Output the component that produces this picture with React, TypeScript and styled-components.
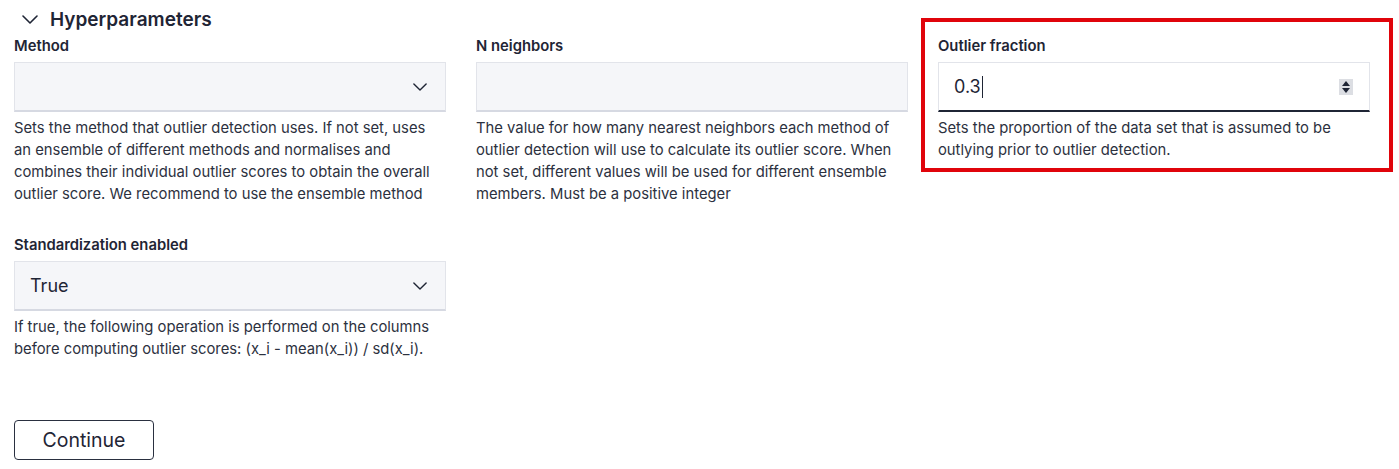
import React from "react";
import styled, { createGlobalStyle } from "styled-components";

const Global = createGlobalStyle`
  html, body { margin: 0; padding: 0; background: #ffffff; }
  body { font-family: Inter, "Noto Sans", sans-serif; color: #1f2535; }
  * { box-sizing: border-box; }
`;

const Page = styled.div`
  padding: 0 14px;
  width: 1399px;
`;

const SectionHeader = styled.div`
  display: flex;
  align-items: center;
  gap: 12px;
  height: 36px;
  padding-left: 8px;
  padding-top: 2px;
`;

const Title = styled.h2`
  margin: 0;
  font-size: 19px;
  font-weight: 600;
  color: #1f2535;
`;

const Grid = styled.div`
  display: grid;
  grid-template-columns: repeat(3, 432px);
  column-gap: 30px;
  row-gap: 30px;
  align-items: start;
`;

const Field = styled.div`
  position: relative;
  display: flex;
  flex-direction: column;
`;

const Highlight = styled.div`
  position: absolute;
  left: -17px;
  right: -23px;
  top: -18px;
  bottom: -11px;
  border: 4px solid #e0040b;
  pointer-events: none;
`;

const Label = styled.label`
  font-size: 14.8px;
  font-weight: 600;
  line-height: 20px;
  color: #1f2535;
  margin-bottom: 6px;
`;

const Box = styled.div<{ $variant: "muted" | "active" }>`
  height: 50px;
  display: flex;
  align-items: center;
  justify-content: space-between;
  padding: 0 18px 0 15px;
  font-size: 18px;
  color: #1f2535;
  background: ${(p) => (p.$variant === "muted" ? "#f5f6f9" : "#ffffff")};
  border: 1px solid #e2e4ea;
  border-bottom: ${(p) =>
    p.$variant === "muted" ? "2px solid #d6d9e2" : "2px solid #1f2535"};
`;

const Caret = styled.span`
  display: inline-block;
  width: 1px;
  height: 22px;
  background: #1f2535;
  margin-left: 1px;
`;

const Value = styled.span`
  display: flex;
  align-items: center;
`;

const Spinner = styled.span`
  display: flex;
  flex-direction: column;
  align-items: center;
  justify-content: center;
  gap: 2px;
  width: 14px;
  height: 16px;
  background: #dcdee3;
  margin-right: -2px;
`;

const Help = styled.p`
  margin: 5px 0 0;
  font-size: 14.8px;
  line-height: 22px;
  color: #2c3140;
`;

const Actions = styled.div`
  margin-top: 60px;
`;

const Button = styled.button`
  width: 140px;
  height: 40px;
  background: #ffffff;
  border: 1px solid #2a3040;
  border-radius: 4px;
  font-family: Inter, "Noto Sans", sans-serif;
  font-size: 19.5px;
  color: #1f2535;
  cursor: pointer;
`;

const Chevron = ({ size = 16 }: { size?: number }) => (
  <svg width={size} height={size / 2 + 1} viewBox="0 0 16 9" fill="none">
    <path d="M1 1l7 7 7-7" stroke="#1f2535" strokeWidth="1.6" strokeLinecap="round" strokeLinejoin="round" />
  </svg>
);

const SpinArrows = () => (
  <Spinner>
    <svg width="8" height="5" viewBox="0 0 8 5"><path d="M0 5L4 0L8 5Z" fill="#1f2535" /></svg>
    <svg width="8" height="5" viewBox="0 0 8 5"><path d="M0 0L4 5L8 0Z" fill="#1f2535" /></svg>
  </Spinner>
);

export default function App() {
  return (
    <>
      <Global />
      <Page>
        <SectionHeader>
          <Chevron size={16} />
          <Title>Hyperparameters</Title>
        </SectionHeader>
        <Grid>
          <Field>
            <Label>Method</Label>
            <Box $variant="muted">
              <span />
              <Chevron size={14} />
            </Box>
            <Help>
              Sets the method that outlier detection uses. If not set, uses an ensemble of different
              methods and normalises and combines their individual outlier scores to obtain the
              overall outlier score. We recommend to use the ensemble method
            </Help>
          </Field>
          <Field>
            <Label>N neighbors</Label>
            <Box $variant="muted" />
            <Help>
              The value for how many nearest neighbors each method of outlier detection will use to
              calculate its outlier score. When not set, different values will be used for different
              ensemble members. Must be a positive integer
            </Help>
          </Field>
          <Field>
            <Highlight />
            <Label>Outlier fraction</Label>
            <Box $variant="active">
              <Value>
                0.3
                <Caret />
              </Value>
              <SpinArrows />
            </Box>
            <Help>
              Sets the proportion of the data set that is assumed to be outlying prior to outlier
              detection.
            </Help>
          </Field>
          <Field>
            <Label>Standardization enabled</Label>
            <Box $variant="muted">
              <span>True</span>
              <Chevron size={14} />
            </Box>
            <Help>
              If true, the following operation is performed on the columns before computing outlier
              scores: (x_i - mean(x_i)) / sd(x_i).
            </Help>
          </Field>
        </Grid>
        <Actions>
          <Button>Continue</Button>
        </Actions>
      </Page>
    </>
  );
}
